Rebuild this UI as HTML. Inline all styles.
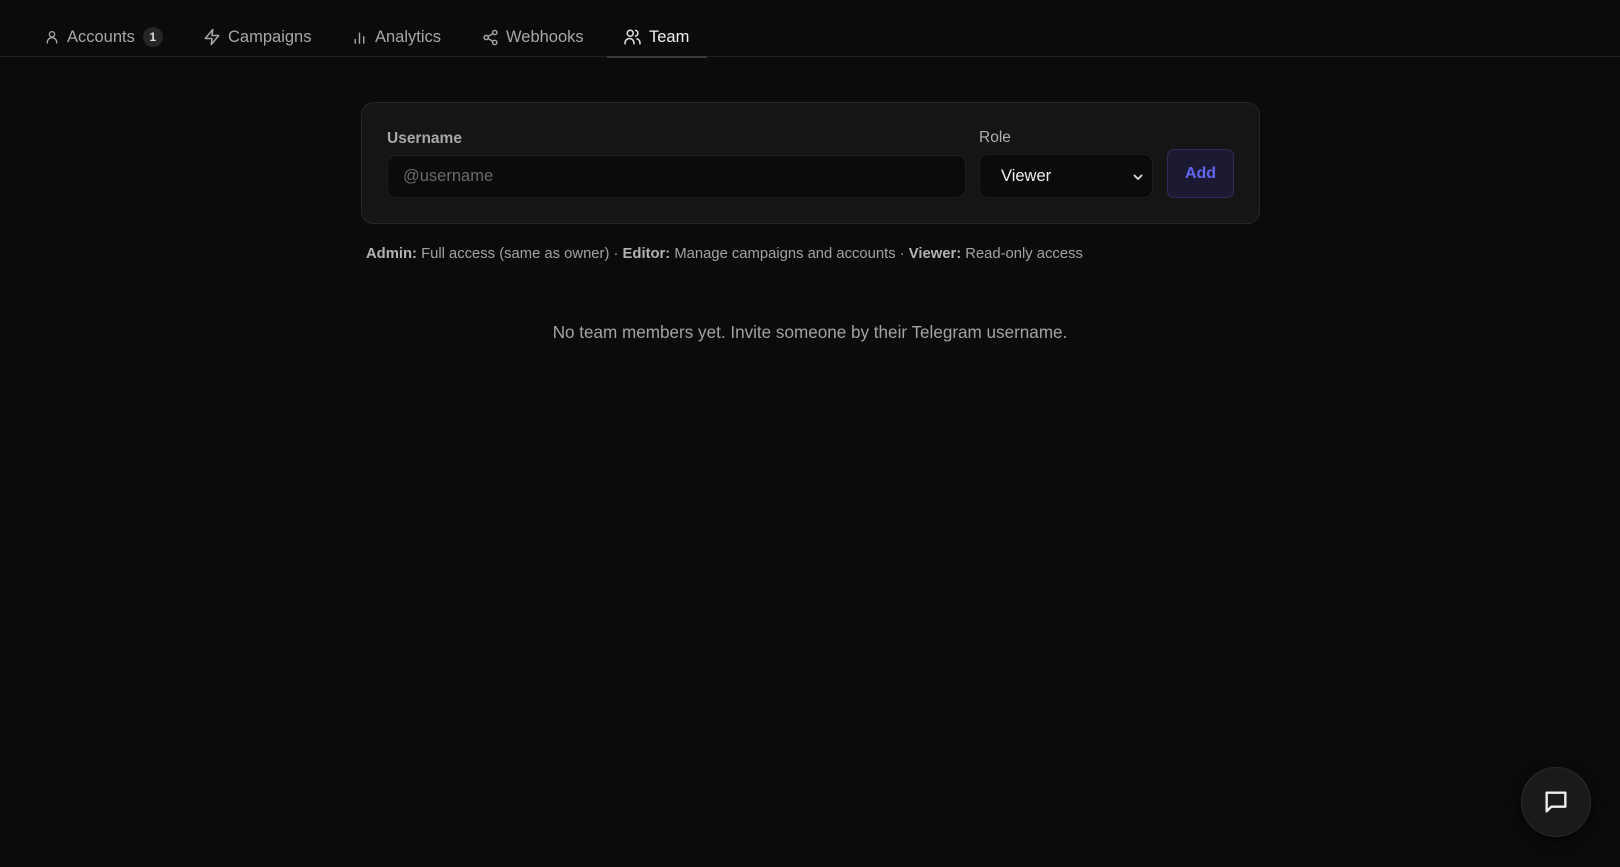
<!DOCTYPE html>
<html><head><meta charset="utf-8"><style>
*{box-sizing:border-box;margin:0;padding:0}
body{width:1620px;height:867px;background:#0b0b0b;font-family:"Liberation Sans",sans-serif;color:#a3a3a3;position:relative;overflow:hidden}
.nav{position:absolute;left:0;top:0;width:1620px;height:57px;border-bottom:1px solid #222}
.tab{position:absolute;top:25px;height:24px;display:flex;align-items:center;font-size:16.5px;color:#a8a8a8;white-space:nowrap}
.tab svg{margin-right:7px}
.badge{display:inline-flex;align-items:center;justify-content:center;width:20px;height:20px;border-radius:10px;background:#262626;color:#ddd;font-size:12px;font-weight:bold;margin-left:8px}
.ul{position:absolute;left:607px;top:56px;width:100px;height:2px;background:#3a3a3a}
.card{position:absolute;left:361px;top:102px;width:899px;height:122px;background:#151515;border:1px solid #262626;border-radius:13px}
.lbl{position:absolute;font-size:15.5px;color:#a8a8a8;font-weight:bold}
.inp{position:absolute;background:#0b0b0b;border:1px solid #1f1f1f;border-radius:9px;display:flex;align-items:center;font-size:16.5px}
.add{position:absolute;left:1167px;top:149px;width:67px;height:49px;background:#1c1a33;border:1px solid #2f2c5a;border-radius:7px;color:#6366f1;font-weight:bold;font-size:16px;display:flex;align-items:center;justify-content:center}
.help{position:absolute;left:366px;top:246px;font-size:14.8px;color:#a3a3a3}
.help b{color:#b3b3b3}
.empty{position:absolute;left:0;width:1620px;text-align:center;top:323px;font-size:17.1px;color:#a3a3a3}
.chat{position:absolute;left:1521px;top:767px;width:70px;height:70px;border-radius:50%;background:#1a1a1a;border:1px solid #2a2a2a;display:flex;align-items:center;justify-content:center;box-shadow:0 4px 14px rgba(0,0,0,.6)}
</style></head><body>
<div class="nav">
<div class="tab" style="left:44px"><svg width="16" height="16" viewBox="0 0 24 24" fill="none" stroke="#a8a8a8" stroke-width="2" stroke-linecap="round"><circle cx="12" cy="8" r="4"/><path d="M5 21v-1a7 7 0 0 1 14 0v1"/></svg>Accounts<span class="badge">1</span></div>
<div class="tab" style="left:203px"><svg width="18" height="18" viewBox="0 0 24 24" fill="none" stroke="#a8a8a8" stroke-width="2" stroke-linejoin="round"><path d="M13 2 3 14h9l-1 8 10-12h-9l1-8z"/></svg>Campaigns</div>
<div class="tab" style="left:351px"><svg width="17" height="17" viewBox="0 0 24 24" fill="none" stroke="#a8a8a8" stroke-width="2" stroke-linecap="round"><path d="M6 20v-5M12 20V6M18 20v-9"/></svg>Analytics</div>
<div class="tab" style="left:482px"><svg width="17" height="17" viewBox="0 0 24 24" fill="none" stroke="#a8a8a8" stroke-width="2"><circle cx="18" cy="5" r="3"/><circle cx="6" cy="12" r="3"/><circle cx="18" cy="19" r="3"/><path d="m8.6 13.5 6.8 4M15.4 6.5l-6.8 4"/></svg>Webhooks</div>
<div class="tab" style="left:623px;color:#f2f2f2"><svg width="19" height="18" viewBox="0 0 24 24" fill="none" stroke="#e5e5e5" stroke-width="2" stroke-linecap="round"><circle cx="9" cy="7" r="4"/><path d="M2 21v-1a6 6 0 0 1 12 0v1M16 3.1a4 4 0 0 1 0 7.8M22 21v-1a6 6 0 0 0-4-5.6"/></svg>Team</div>
</div>
<div class="ul"></div>
<div class="card"></div>
<div class="lbl" style="left:387px;top:130px">Username</div>
<div class="inp" style="left:387px;top:155px;width:579px;height:43px;padding-left:15px;color:#6b6b6b">@username</div>
<div class="lbl" style="left:979px;top:129px;font-weight:normal;color:#b0b0b0">Role</div>
<div class="inp" style="left:979px;top:154px;width:174px;height:44px;padding-left:21px;color:#f0f0f0">Viewer<svg style="position:absolute;right:8px;top:17px" width="12" height="10" viewBox="0 0 12 10" fill="none" stroke="#ddd" stroke-width="1.8"><path d="M2 3l4 4 4-4"/></svg></div>
<div class="add">Add</div>
<div class="help"><b>Admin:</b> Full access (same as owner) · <b>Editor:</b> Manage campaigns and accounts · <b>Viewer:</b> Read-only access</div>
<div class="empty">No team members yet. Invite someone by their Telegram username.</div>
<div class="chat"><svg width="28" height="28" viewBox="0 0 24 24" fill="none" stroke="#f0f0f0" stroke-width="2" stroke-linejoin="round"><path d="M4 4h16v12H8l-4 4z"/></svg></div>
</body></html>
